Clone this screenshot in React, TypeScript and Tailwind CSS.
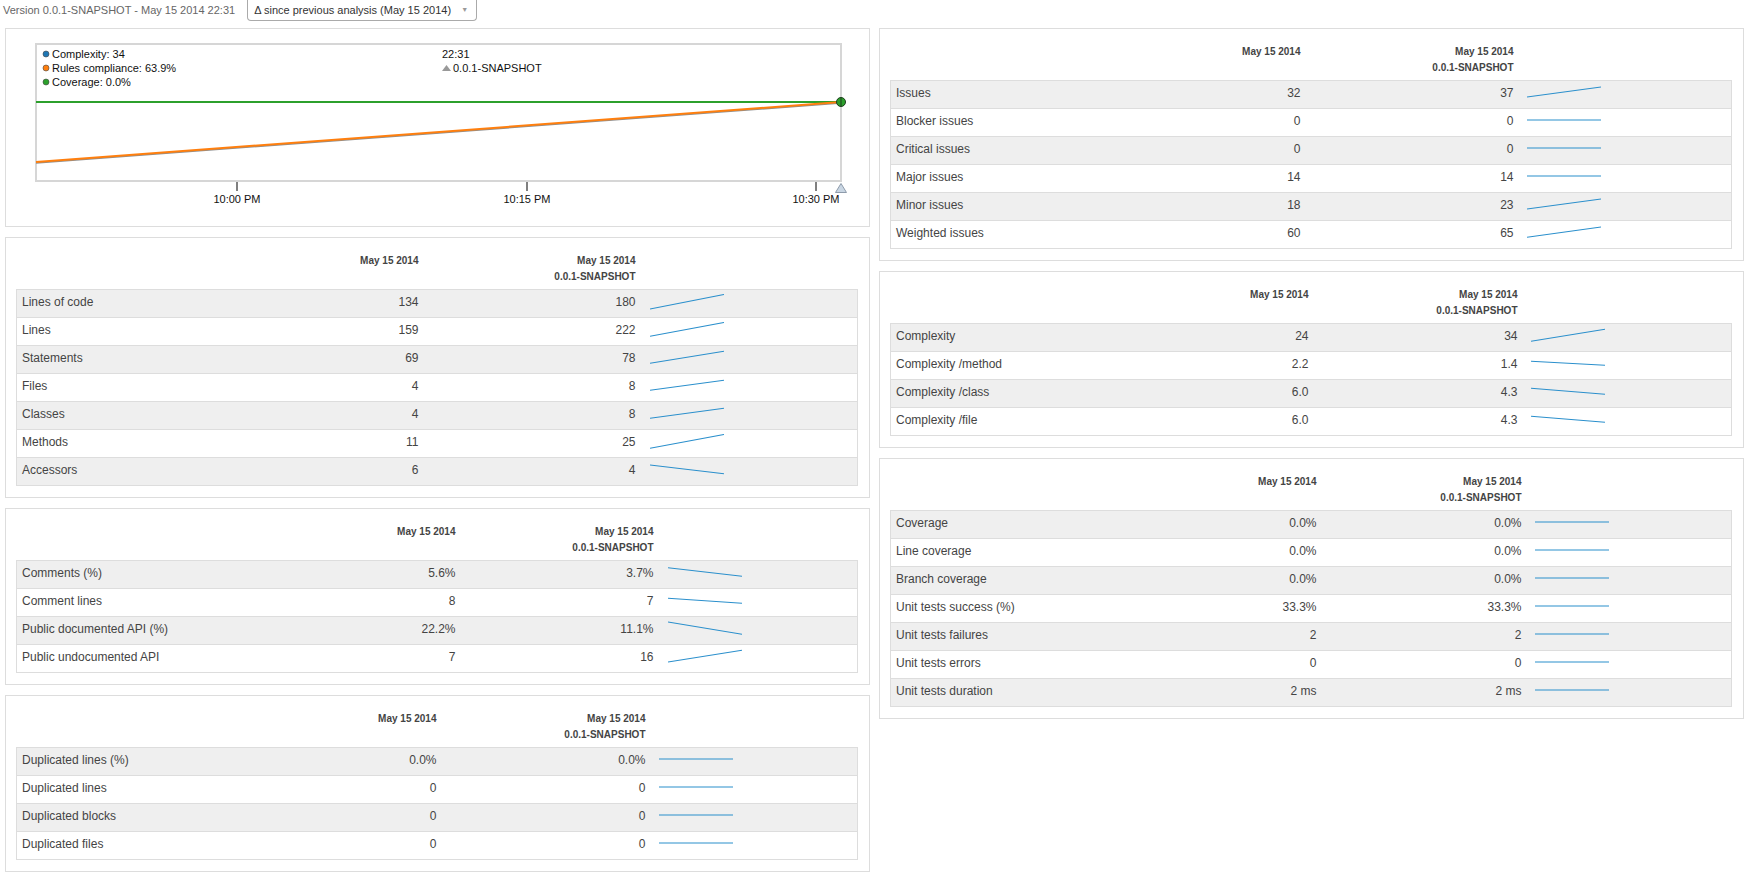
import React from "react";

type Row = {
  label: string;
  v1: string;
  v2: string;
  // sparkline start/end y, 0 = top of the 16px spark box
  y1: number;
  y2: number;
};

type Panel = {
  cols: [string, string, string];
  gap: string;
  rows: Row[];
};

const flat = (label: string, v1: string, v2: string): Row => ({ label, v1, v2, y1: 7, y2: 7 });

const sizePanel: Panel = {
  cols: ["w-[302px]", "w-[100px]", "w-[217px]"],
  gap: "pl-[14px]",
  rows: [
    { label: "Lines of code", v1: "134", v2: "180", y1: 15, y2: 0.5 },
    { label: "Lines", v1: "159", v2: "222", y1: 14.3, y2: 0.5 },
    { label: "Statements", v1: "69", v2: "78", y1: 13.3, y2: 1.3 },
    { label: "Files", v1: "4", v2: "8", y1: 12.3, y2: 2.3 },
    { label: "Classes", v1: "4", v2: "8", y1: 12.3, y2: 2.3 },
    { label: "Methods", v1: "11", v2: "25", y1: 14.3, y2: 0.5 },
    { label: "Accessors", v1: "6", v2: "4", y1: 3, y2: 11.7 },
  ],
};

const commentsPanel: Panel = {
  cols: ["w-[339px]", "w-[100px]", "w-[198px]"],
  gap: "pl-[14px]",
  rows: [
    { label: "Comments (%)", v1: "5.6%", v2: "3.7%", y1: 2.7, y2: 11.3 },
    { label: "Comment lines", v1: "8", v2: "7", y1: 5.3, y2: 10.3 },
    { label: "Public documented API (%)", v1: "22.2%", v2: "11.1%", y1: 1, y2: 13.3 },
    { label: "Public undocumented API", v1: "7", v2: "16", y1: 13, y2: 1.3 },
  ],
};

const dupPanel: Panel = {
  cols: ["w-[320px]", "w-[100px]", "w-[209px]"],
  gap: "pl-[13px]",
  rows: [
    flat("Duplicated lines (%)", "0.0%", "0.0%"),
    flat("Duplicated lines", "0", "0"),
    flat("Duplicated blocks", "0", "0"),
    flat("Duplicated files", "0", "0"),
  ],
};

const issuesPanel: Panel = {
  cols: ["w-[310px]", "w-[100px]", "w-[213px]"],
  gap: "pl-[13px]",
  rows: [
    { label: "Issues", v1: "32", v2: "37", y1: 12, y2: 2 },
    flat("Blocker issues", "0", "0"),
    flat("Critical issues", "0", "0"),
    flat("Major issues", "14", "14"),
    { label: "Minor issues", v1: "18", v2: "23", y1: 12, y2: 2 },
    { label: "Weighted issues", v1: "60", v2: "65", y1: 12.3, y2: 2 },
  ],
};

const complexityPanel: Panel = {
  cols: ["w-[318px]", "w-[100px]", "w-[209px]"],
  gap: "pl-[13px]",
  rows: [
    { label: "Complexity", v1: "24", v2: "34", y1: 13.3, y2: 1.3 },
    { label: "Complexity /method", v1: "2.2", v2: "1.4", y1: 5.3, y2: 9.3 },
    { label: "Complexity /class", v1: "6.0", v2: "4.3", y1: 4.3, y2: 10.3 },
    { label: "Complexity /file", v1: "6.0", v2: "4.3", y1: 4.3, y2: 10.3 },
  ],
};

const coveragePanel: Panel = {
  cols: ["w-[326px]", "w-[100px]", "w-[205px]"],
  gap: "pl-[13px]",
  rows: [
    flat("Coverage", "0.0%", "0.0%"),
    flat("Line coverage", "0.0%", "0.0%"),
    flat("Branch coverage", "0.0%", "0.0%"),
    flat("Unit tests success (%)", "33.3%", "33.3%"),
    flat("Unit tests failures", "2", "2"),
    flat("Unit tests errors", "0", "0"),
    flat("Unit tests duration", "2 ms", "2 ms"),
  ],
};

function Spark({ y1, y2 }: { y1: number; y2: number }) {
  return (
    <svg className="block mt-[4px]" width={74} height={16} viewBox="0 0 74 16">
      <line x1={0} y1={y1} x2={74} y2={y2} stroke="#2a8fcc" strokeWidth={1.1} />
    </svg>
  );
}

function MeasureTable({ panel }: { panel: Panel }) {
  return (
    <div className="border border-[#ddd] bg-white pt-[10px] pl-[10px] pr-[11px] pb-[11px] mb-[10px]">
      <table className="w-full table-fixed">
        <colgroup>
          <col className={panel.cols[0]} />
          <col className={panel.cols[1]} />
          <col className={panel.cols[2]} />
          <col />
        </colgroup>
        <thead>
          <tr className="text-[10px] font-bold text-[#444] leading-[16px]">
            <th className="p-0 pt-[5px] pb-[4px]" />
            <th className="p-0 pt-[5px] pb-[4px] text-right align-top font-bold">May 15 2014</th>
            <th className="p-0 pt-[5px] pb-[4px] text-right align-top font-bold">
              <div>May 15 2014</div>
              <div>0.0.1-SNAPSHOT</div>
            </th>
            <th className="p-0" />
          </tr>
        </thead>
        <tbody>
          {panel.rows.map((r, i) => (
            <tr
              key={r.label}
              className={`border border-[#ddd] text-[12px] text-[#444] ${i % 2 === 0 ? "bg-[#efefef]" : "bg-white"}`}
            >
              <td className="p-0 align-top">
                <div className="h-[27px] leading-[24px] pl-[5px] whitespace-nowrap">{r.label}</div>
              </td>
              <td className="p-0 align-top text-right">
                <div className="h-[27px] leading-[24px]">{r.v1}</div>
              </td>
              <td className="p-0 align-top text-right">
                <div className="h-[27px] leading-[24px]">{r.v2}</div>
              </td>
              <td className={`p-0 align-top ${panel.gap}`}>
                <Spark y1={r.y1} y2={r.y2} />
              </td>
            </tr>
          ))}
        </tbody>
      </table>
    </div>
  );
}

function HistoryChart() {
  const ticks = [
    { x: 231, label: "10:00 PM" },
    { x: 521, label: "10:15 PM" },
    { x: 810, label: "10:30 PM" },
  ];
  const legend = [
    { y: 25, color: "#1f77b4", text: "Complexity: 34" },
    { y: 39, color: "#ff7f0e", text: "Rules compliance: 63.9%" },
    { y: 53, color: "#2ca02c", text: "Coverage: 0.0%" },
  ];
  return (
    <div className="border border-[#ddd] bg-white h-[199px] mb-[10px]">
      <svg width={863} height={197} className="block" fontFamily="'Liberation Sans', Arial, sans-serif">
        <rect x={30} y={15} width={805} height={137} fill="white" stroke="#d6d6d6" strokeWidth={2} />
        {/* series */}
        <line x1={30} y1={73} x2={835} y2={73} stroke="#2ca02c" strokeWidth={2} />
        <line x1={30} y1={134} x2={835} y2={74} stroke="#8f8f8f" strokeWidth={1.5} />
        <line x1={30} y1={133} x2={835} y2={73} stroke="#ff7f0e" strokeWidth={2} />
        <circle cx={835} cy={73} r={4.5} fill="#2ca02c" stroke="#1d3d1d" strokeWidth={1} />
        <line x1={835} y1={69} x2={835} y2={77} stroke="#1d3d1d" strokeWidth={1} />
        {/* legend */}
        {legend.map((l) => (
          <g key={l.text}>
            <circle cx={40} cy={l.y} r={3} fill={l.color} stroke="#444" strokeWidth={0.6} />
            <text x={46} y={l.y + 4} fontSize={11} fill="#111">
              {l.text}
            </text>
          </g>
        ))}
        <text x={436} y={29} fontSize={11} fill="#111">
          22:31
        </text>
        <polygon points="436,42 440.5,36 445,42" fill="#999" />
        <text x={447} y={43} fontSize={11} fill="#111">
          0.0.1-SNAPSHOT
        </text>
        {/* x axis */}
        {ticks.map((t) => (
          <g key={t.label}>
            <line x1={t.x} y1={153} x2={t.x} y2={162} stroke="#000" strokeWidth={1} />
            <text x={t.x} y={174} fontSize={11} fill="#111" textAnchor="middle">
              {t.label}
            </text>
          </g>
        ))}
        <polygon points="829.5,163.5 835,154.5 840.5,163.5" fill="#c9d6e3" stroke="#8e9bab" strokeWidth={1} />
      </svg>
    </div>
  );
}

export default function App() {
  return (
    <div className="min-h-screen bg-white font-['Liberation_Sans',Arial,sans-serif] text-[#444]">
      {/* Version bar */}
      <div className="flex items-start h-[28px] pl-[3px]">
        <span className="mt-[3px] text-[11px] leading-[14px] text-[#666]">
          Version 0.0.1-SNAPSHOT - May 15 2014 22:31
        </span>
        <div className="ml-[12px] w-[230px] h-[21px] border border-t-0 border-[#aaa] rounded-b-[4px] flex items-center pl-[6px] pr-[8px] text-[11px] text-[#333]">
          <span className="flex-1">Δ since previous analysis (May 15 2014)</span>
          <span className="text-[7px] text-[#999]">▼</span>
        </div>
      </div>

      <div className="flex gap-[9px] pl-[5px]">
        <div className="flex-1 min-w-0">
          <HistoryChart />
          <MeasureTable panel={sizePanel} />
          <MeasureTable panel={commentsPanel} />
          <MeasureTable panel={dupPanel} />
        </div>
        <div className="flex-1 min-w-0">
          <MeasureTable panel={issuesPanel} />
          <MeasureTable panel={complexityPanel} />
          <MeasureTable panel={coveragePanel} />
        </div>
      </div>
    </div>
  );
}
